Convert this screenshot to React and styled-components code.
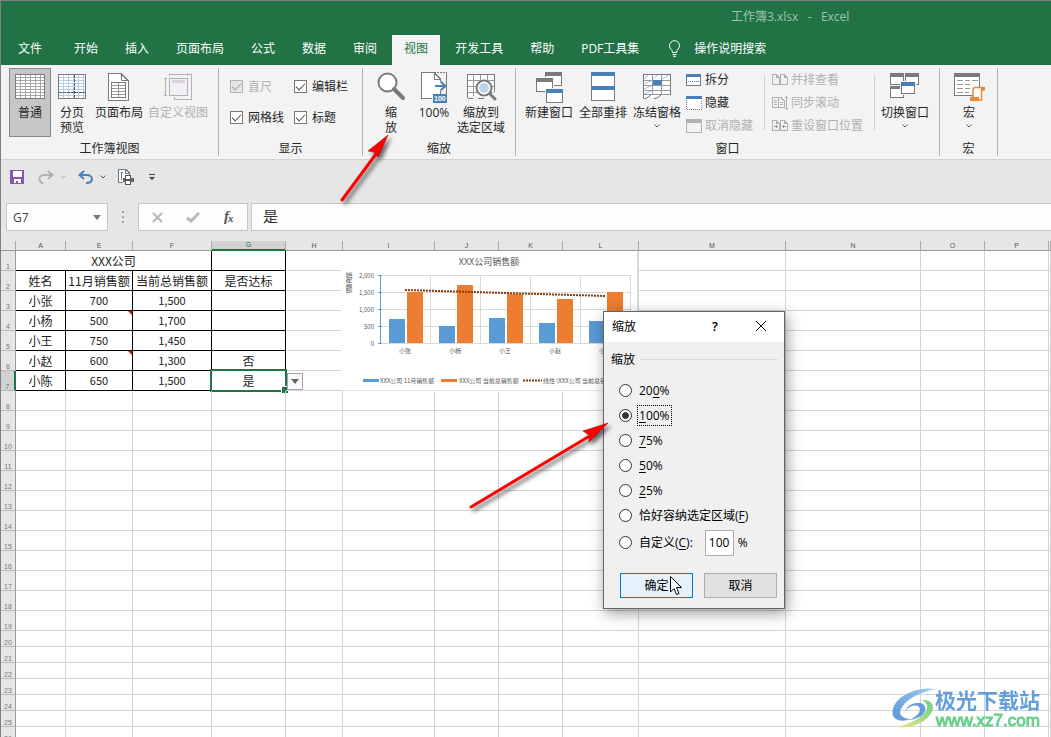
import React from 'react';
import styled, { createGlobalStyle } from 'styled-components';

const GlobalStyle = createGlobalStyle`
  * {
    box-sizing: border-box;
  }
  body {
    margin: 0;
    overflow: hidden;
    font-family: "Open Sans", "Noto Sans CJK SC", sans-serif;
    font-size: 12px;
    line-height: 15px;
    color: #262626;
  }
  button, input {
    font: inherit;
    color: inherit;
  }
  svg {
    display: block;
    flex: none;
  }
`;

const Window = styled.div`
  position: relative;
  display: flex;
  flex-direction: column;
  height: 100vh;
  overflow: hidden;
  border-left: 1px solid #7f7f7f;
  border-top: 1px solid #7f7f7f;
  background: #e6e6e6;
`;

/* ---------- title bar and tabs ---------- */

const TitleBar = styled.header`
  height: 34px;
  padding-left: 730px;
  line-height: 32px;
  white-space: pre;
  color: #9cc5ac;
  background: #217346;
`;

const TabBar = styled.nav`
  display: flex;
  gap: 3px;
  height: 30px;
  padding-left: 5px;
  background: #217346;
`;

const Tab = styled.button`
  height: 30px;
  padding: 0 12px 4px;
  border: 0;
  white-space: nowrap;
  margin-right: ${p => p.$file ? '5px' : '0'};
  color: ${p => p.$active ? '#217346' : '#fff'};
  background: ${p => p.$active ? '#f3f3f3' : 'transparent'};
`;

const TellMe = styled.button`
  display: flex;
  align-items: center;
  gap: 13px;
  padding: 0 14px 4px;
  border: 0;
  color: #fff;
  background: transparent;
`;

/* ---------- ribbon ---------- */

const Ribbon = styled.div`
  display: flex;
  height: 95px;
  padding: 3px 0;
  background: #f3f3f3;
  border-bottom: 1px solid #d2d2d2;
`;

const Group = styled.section`
  display: flex;
  flex-direction: column;
  flex: none;
  width: ${p => p.$width}px;
  padding-left: ${p => p.$pad}px;
  border-right: 1px solid #b4b4b4;
`;

const GroupBody = styled.div`
  display: flex;
  height: 73px;
`;

const GroupName = styled.div`
  margin-left: -${p => p.$pad}px;
  text-align: center;
`;

const BigButton = styled.button`
  display: flex;
  flex-direction: column;
  align-items: center;
  flex: none;
  width: ${p => p.$width}px;
  height: 69px;
  padding: 3px 0 0;
  border: 1px solid ${p => p.$pressed ? '#8a8a8a' : 'transparent'};
  background: ${p => p.$pressed ? '#c6c6c6' : 'transparent'};
  color: ${p => p.disabled ? '#b1b1b1' : '#262626'};
  white-space: pre;

  svg + span {
    margin: 1px -8px 0;
  }
  span + svg {
    margin-top: 4px;
  }
`;

const SmallColumn = styled.div`
  display: flex;
  flex-direction: column;
  width: ${p => p.$width}px;
  padding-left: 2px;
`;

const SmallButton = styled.button`
  display: flex;
  align-items: center;
  gap: 3px;
  height: 23px;
  padding: 0;
  border: 0;
  background: transparent;
  white-space: nowrap;
  color: ${p => p.disabled ? '#b1b1b1' : '#262626'};
`;

const Divider = styled.div`
  width: 1px;
  height: 55px;
  margin: 7px ${p => p.$gap}px 0 0;
  background: #d0d0d0;
`;

const CheckGrid = styled.div`
  display: grid;
  grid-template-columns: 64px 70px;
  grid-auto-rows: 31px;
  padding-top: 3px;
`;

const CheckLabel = styled.label`
  display: flex;
  align-items: center;
  gap: 5px;
  color: ${p => p.$disabled ? '#b1b1b1' : '#262626'};

  input {
    appearance: none;
    width: 13px;
    height: 13px;
    margin: 0;
    border: 1px solid ${p => p.$disabled ? '#b1b1b1' : '#777'};
    background: ${p => p.$disabled ? '#e6e6e6' : '#fff'};
  }
  input:checked::before {
    content: "";
    display: block;
    width: 8px;
    height: 4px;
    margin: 2px 0 0 1px;
    border: solid ${p => p.$disabled ? '#a0a0a0' : '#555'};
    border-width: 0 0 1px 1px;
    transform: rotate(-45deg);
  }
`;

/* ---------- quick access and formula bar ---------- */

const QuickAccess = styled.div`
  display: flex;
  align-items: center;
  gap: 12px;
  height: 34px;
  padding-left: 9px;
`;

const ToolButton = styled.button`
  display: flex;
  align-items: center;
  justify-content: center;
  gap: 6px;
  min-width: 12px;
  height: 20px;
  padding: 0;
  border: 0;
  background: transparent;
`;

const FormulaBar = styled.div`
  display: flex;
  flex: none;
  padding: 9px 0 10px 5px;
`;

const NameBox = styled.div`
  display: flex;
  align-items: center;
  width: 102px;
  height: 28px;
  padding-right: 6px;
  border: 1px solid #c6c6c6;
  background: #fdfdfd;

  input {
    flex: 1;
    min-width: 0;
    padding: 0 6px;
    border: 0;
    background: transparent;
    color: #444;
  }
`;

const Dots = styled.div`
  display: flex;
  flex-direction: column;
  align-items: center;
  justify-content: center;
  gap: 3px;
  width: 30px;

  i {
    width: 2px;
    height: 2px;
    background: #a6a6a6;
  }
`;

const EditButtons = styled.div`
  display: flex;
  width: 110px;
  margin-right: 3px;
  border: 1px solid #c6c6c6;
  background: #fdfdfd;

  button {
    display: flex;
    flex: 1;
    align-items: center;
    justify-content: center;
    padding: 0;
    border: 0;
    background: transparent;
  }
`;

const FormulaInput = styled.input`
  flex: 1;
  min-width: 0;
  padding: 0 11px 4px;
  border: 1px solid #c6c6c6;
  border-right: 0;
  background: #fdfdfd;
  font-size: 15px;
  color: #333;
`;

/* ---------- sheet ---------- */

const Sheet = styled.main`
  position: relative;
  flex: 1;
  min-height: 0;
  overflow: hidden;
`;

const Grid = styled.table`
  width: 100%;
  table-layout: fixed;
  border-collapse: separate;
  border-spacing: 0;
  background: #fff;
  font-family: "Noto Sans CJK SC", sans-serif;
  color: #1c1c1c;
`;

const ColHead = styled.th`
  height: 10px;
  padding: 0;
  border-right: 1px solid #ababab;
  border-bottom: ${p => p.$current ? '2px solid #217346' : '1px solid #999'};
  background: ${p => p.$current ? '#d2d2d2' : '#e6e6e6'};
  font-family: "Liberation Sans", sans-serif;
  font-size: 7px;
  line-height: 8px;
  font-weight: normal;
  color: ${p => p.$current ? '#217346' : '#555'};
  overflow: hidden;
`;

const RowHead = styled.th`
  height: ${p => p.$short ? 16 : 20}px;
  padding: 0;
  border-right: ${p => p.$current ? '2px solid #217346' : '1px solid #999'};
  border-bottom: 1px solid #b8b8b8;
  background: ${p => p.$current ? '#d2d2d2' : '#e6e6e6'};
  font-family: "Liberation Sans", sans-serif;
  font-size: 7px;
  line-height: 7px;
  font-weight: normal;
  vertical-align: bottom;
  color: #777;
`;

const Cell = styled.td`
  position: relative;
  padding: 0;
  border-right: 1px solid ${p => p.$ruled ? '#000' : '#d4d4d4'};
  border-bottom: 1px solid ${p => p.$ruled ? '#000' : '#d4d4d4'};
  text-align: center;
  white-space: nowrap;
  font-size: ${p => p.$number ? 11 : 12}px;
  line-height: 15px;
`;

const Comment = styled.i`
  position: absolute;
  top: 0;
  right: 0;
  border: 2px solid;
  border-color: #e00 #e00 transparent transparent;
`;

const Selection = styled.div`
  position: absolute;
  inset: -2px;
  border: 2px solid #217346;

  &::after {
    content: "";
    position: absolute;
    right: -4px;
    bottom: -4px;
    width: 6px;
    height: 6px;
    border: 1px solid #fff;
    background: #217346;
  }
`;

const CellDropdown = styled.button`
  position: absolute;
  left: 75px;
  top: 2px;
  z-index: 1;
  display: flex;
  align-items: center;
  justify-content: center;
  width: 16px;
  height: 17px;
  padding: 0;
  border: 1px solid #a0a6b0;
  background: #f8f9fb;
`;

const ChartFrame = styled.figure`
  position: absolute;
  left: 340px;
  top: 10px;
  width: 298px;
  height: 140px;
  margin: 0;
  border-right: 2px solid #d9d9d9;
  border-bottom: 1px solid #e4e4e4;
  background: #fff;

  text {
    font-family: "Noto Sans CJK SC", sans-serif;
    font-size: 6px;
    fill: #595959;
  }
  .title {
    font-size: 9px;
  }
  .axis {
    font-size: 7px;
    writing-mode: vertical-rl;
  }
`;

/* ---------- zoom dialog ---------- */

const Dialog = styled.form`
  position: absolute;
  left: 602px;
  top: 310px;
  width: 182px;
  border: 1px solid #666;
  background: #f0f0f0;
  color: #000;
  box-shadow: 2px 4px 14px rgba(0, 0, 0, .4);
`;

const DialogTitle = styled.div`
  display: flex;
  align-items: center;
  height: 30px;
  padding: 0 0 2px 8px;
  background: #fff;

  span {
    flex: 1;
  }
  button {
    display: flex;
    align-items: center;
    justify-content: center;
    width: 46px;
    height: 28px;
    padding: 0;
    border: 0;
    background: transparent;
    font-size: 13px;
    font-weight: 600;
  }
`;

const Options = styled.fieldset`
  margin: 0;
  padding: 9px 7px 0;
  border: 0;
`;

const Legend = styled.div`
  display: flex;
  align-items: center;
  gap: 5px;
  height: 16px;
  margin-bottom: 11px;

  &::after {
    content: "";
    flex: 1;
    height: 1px;
    margin-right: -1px;
    background: #dcdcdc;
  }
`;

const Option = styled.div`
  display: flex;
  align-items: center;
  height: ${p => p.$tall ? 29 : 25}px;
  padding-left: 8px;

  input[type="radio"] {
    appearance: none;
    width: 13px;
    height: 13px;
    margin: 0 5px 0 0;
    border: 1px solid #333;
    border-radius: 50%;
    background: #fff;
  }
  input[type="radio"]:checked {
    padding: 2px;
    background: #333 content-box;
    background-image: none;
    box-shadow: inset 0 0 0 2px #fff;
  }
  label {
    padding: 2px 1px;
    border: 1px dotted ${p => p.$focused ? '#000' : 'transparent'};
    white-space: nowrap;
  }
  u {
    text-underline-offset: 2px;
  }
`;

const PercentInput = styled.input`
  width: 29px;
  height: 26px;
  margin: 0 4px 0 10px;
  padding: 0 0 0 3px;
  border: 1px solid #adadad;
  background: #fff;
`;

const DialogButtons = styled.div`
  display: flex;
  gap: 11px;
  padding: 16px 7px 10px 16px;
`;

const DialogButton = styled.button`
  flex: 1;
  height: 25px;
  padding: 0;
  border: 1px solid ${p => p.$primary ? '#0078d7' : '#adadad'};
  background: ${p => p.$primary ? '#e5f1fb' : '#e1e1e1'};
  color: #000;
`;

/* ---------- things floating over the window ---------- */

const Overlay = styled.svg`
  position: absolute;
  left: ${p => p.$x}px;
  top: ${p => p.$y}px;
  overflow: visible;
  pointer-events: none;
  filter: ${p => p.$shadow ? 'drop-shadow(3px 3px 2px rgba(0, 0, 0, .6))' : 'none'};
`;

const Watermark = styled.div`
  position: absolute;
  right: 11px;
  bottom: 6px;
  display: flex;
  align-items: center;
  opacity: .85;
  pointer-events: none;
`;

const WatermarkText = styled.div`
  margin-left: -2px;
  font-family: "Noto Sans CJK SC", sans-serif;
  font-size: 21px;
  font-weight: bold;
  line-height: 24px;
  color: #4a90d4;

  small {
    display: block;
    padding-left: 1px;
    font-family: "Liberation Sans", sans-serif;
    font-size: 17px;
    line-height: 20px;
    font-weight: normal;
    -webkit-text-stroke: 1px #4fc878;
    color: #4fc878;
  }
`;

/* ---------- icons ---------- */

const G = '#7a7a7a';
const B = '#4a80b8';
const L = '#b1b1b1';

const Icon = ({ children, w = 32, h = 32 }) => (
  <svg width={w} height={h} viewBox={`0 0 ${w} ${h}`} fill="none" shapeRendering="crispEdges" aria-hidden="true">
    {children}
  </svg>
);

const lines = (from, to, step, draw) => {
  let d = '';
  for (let n = from; n < to; n += step) d += draw(n);
  return d;
};

// a little window: frame plus coloured caption strip
const Win = ({ x, y, w, h, c = G, strip = 4 }) => (
  <>
    <rect x={x + .5} y={y + .5} width={w - 1} height={h - 1} fill="#fff" stroke={G} />
    <rect x={x} y={y} width={w} height={strip} fill={c} />
  </>
);

const Caret = ({ color = '#555' }) => (
  <svg width="6" height="4" viewBox="0 0 6 4" fill="none" stroke={color}>
    <path d="M.5.5 3 3 5.5.5" />
  </svg>
);

const NormalIcon = () => (
  <Icon>
    <rect x="1.5" y="2.5" width="29" height="24" fill="#fff" stroke={G} />
    <path stroke="#a6a6a6" d={lines(6.5, 30, 5, n => `M${n} 3V26`) + lines(5.5, 26, 3, n => `M2 ${n}H30`)} />
  </Icon>
);

const PageBreakIcon = () => (
  <Icon>
    <rect x="2.5" y="2.5" width="27" height="24" fill="#fff" stroke={G} />
    <path stroke="#b5cfea" d={lines(7.5, 29, 5, n => `M${n} 3V26`) + lines(5.5, 26, 3, n => `M3 ${n}H29`)} />
    <path stroke="#555" strokeDasharray="3 1" d="M18.5 3V26M3 20.5H29" />
  </Icon>
);

const PageLayoutIcon = () => (
  <Icon>
    <path d="M5.5 1.5H18L25.5 9V28.5H5.5Z" fill="#fff" stroke={G} />
    <path d="M18.5 1.5V8.5H25.5M18.5 2 25 8.5" stroke={G} shapeRendering="auto" />
    <rect x="8.5" y="10.5" width="14" height="15" stroke={G} />
    <path stroke="#999" d="M15.500 11V25M9 13.5H22M9 16.5H22M9 19.5H22M9 22.5H22" />
  </Icon>
);

const CustomViewIcon = () => (
  <Icon>
    <rect x="7.5" y="6.5" width="18" height="17" fill="#f4eef6" stroke={L} />
    <rect x="10" y="8" width="13" height="3" fill="#d9d2dc" />
    <path stroke={L} d="M7.5 1V4M25.5 1V4M8 2.5H25M2 6.5H5M2 23.5H5M3.5 7V23M26 2.5H29.5V27.5H12.5V25" />
  </Icon>
);

const ZoomIcon = () => (
  <svg width="32" height="32" viewBox="0 0 32 32" fill="none">
    <circle cx="12.500" cy="10.500" r="9" fill="#fff" stroke={G} strokeWidth="2" />
    <path d="M19 17 28 26" stroke={G} strokeWidth="4" strokeLinecap="round" />
  </svg>
);

const Zoom100Icon = () => (
  <Icon>
    <path d="M16 .5H28.500V22M28.500 1V22" stroke={G} strokeDasharray="2 1" />
    <path d="M13 26.500H3.500V.5H16L22.500 7V22" fill="#fff" />
    <path d="M14 26.500H3.500V.5H16L22.500 7V9M22.500 19V22" stroke={G} />
    <path d="M16.500 1V7.500H22.500" stroke={G} />
    <path d="M17 14H27M22.500 9.500 27.500 14 22.500 18.500" stroke={B} strokeWidth="2" shapeRendering="auto" />
    <rect x="15" y="22" width="14" height="9" fill={B} />
    <text x="16" y="29" fontSize="7" fontWeight="bold" fill="#fff" fontFamily="Liberation Sans, sans-serif">100</text>
  </Icon>
);

const ZoomSelectionIcon = () => (
  <Icon>
    <rect x="2.5" y="2.5" width="27" height="21" fill="#fff" />
    <path stroke={G} d="M2.500 26V2.500H29.500V20M2.500 26.500H8M13 26.500H19" />
    <path stroke="#999" d="M3 8.500H29M3 14.500H29M3 20.500H29M8.500 3V24M15.500 3V24M22.500 3V24" />
    <g shapeRendering="auto">
      <circle cx="19" cy="16" r="7.5" fill="#fff" stroke={G} strokeWidth="2" />
      <circle cx="19" cy="16" r="5" fill="#bcd3ec" />
      <path d="M25 22 30 27" stroke={G} strokeWidth="3" strokeLinecap="round" />
    </g>
  </Icon>
);

const NewWindowIcon = () => (
  <Icon>
    <Win x={12} y={0} w={17} h={14} />
    <rect x="2" y="5" width="19" height="16" fill="#f3f3f3" />
    <Win x={3} y={6} w={17} h={14} />
    <rect x="12" y="16" width="19" height="16" fill="#f3f3f3" />
    <Win x={13} y={17} w={17} h={14} c={B} />
  </Icon>
);

const ArrangeIcon = () => (
  <Icon>
    <Win x={4} y={0} w={24} h={15} c={B} />
    <Win x={4} y={14} w={24} h={15} c={B} />
  </Icon>
);

const FreezeIcon = () => (
  <Icon>
    <path d="M2.500 26V2.500H29.500V22.500" fill="#fff" />
    <path d="M2.500 26V2.500H29.500V22.500" stroke={G} />
    <path stroke="#999" d="M3 8.500H29M3 13.500H29M3 18.500H29M3 22.500H29M11.500 3V22M20.500 3V22" />
    <path d="M3 7 7 3M12 7 17 3M21 7 28 3M3 12 10 9M3 17 10 14M3 22 10 19" stroke="#9fc0e3" shapeRendering="auto" />
    <path d="M2.500 26.500H5L10 23M13 26.500H15L20 23" stroke={G} shapeRendering="auto" />
    <rect x="12" y="8" width="9" height="5" fill={B} />
  </Icon>
);

const SwitchIcon = () => (
  <Icon>
    <Win x={1} y={1} w={14} h={12} />
    <Win x={16} y={1} w={14} h={12} />
    <Win x={1} y={14} w={14} h={12} strip={3} />
    <rect x="11" y="9" width="16" height="14" fill="#f3f3f3" />
    <Win x={12} y={10} w={14} h={12} c={B} />
  </Icon>
);

const MacroIcon = () => (
  <Icon>
    <Win x={1} y={1} w={26} h={23} />
    <path stroke="#999" d="M4 8.500H10M12 8.500H17M19 8.500H25M4 12.500H10M12 12.500H17M4 16.500H10M12 16.500H17M4 20.500H10M12 20.500H16" />
    <path d="M21.500 15.500H31V18H28.500V28H18V25.500H20V17Z" fill="#fff" stroke="#e8873a" strokeWidth="1.500" shapeRendering="auto" />
    <path d="M17 25H26V28.500H17ZM28 15H32V18H28Z" fill="#e8873a" />
  </Icon>
);

const SplitIcon = () => (
  <Icon w={16} h={14}>
    <rect x=".5" y="1.500" width="14" height="11" fill="#fff" stroke={G} />
    <rect y="1" width="15" height="3" fill={B} />
    <path stroke={B} strokeDasharray="1 1" d="M2 8.500H13" />
  </Icon>
);

const HideIcon = () => (
  <Icon w={16} h={14}>
    <rect y="1" width="16" height="12" fill="#fff" />
    <path stroke={G} strokeDasharray="1 1" d="M.5 4V13.500H15.500V4" />
    <rect width="16" height="3" fill={B} />
  </Icon>
);

const UnhideIcon = () => (
  <Icon w={16} h={14}>
    <rect x=".5" y="1.500" width="15" height="12" stroke={L} />
    <rect width="16" height="4" fill={L} />
  </Icon>
);

const PAGES = 'M.5 1.500H4L7.500 5V11.500H.5ZM8.500 1.500H12L15.500 5V11.500H8.500ZM4.500 2V4.500H7M12.500 2V4.500H15';

const SideBySideIcon = () => (
  <Icon w={16} h={14}>
    <path d={PAGES} fill="#f4eef6" stroke={L} />
  </Icon>
);

const SyncIcon = () => (
  <Icon w={16} h={14}>
    <path d="M6 1.500H.5V11.500H6M6.500 1.500H9L12.500 5V11.500H6.500Z" fill="#f4eef6" stroke={L} />
    <path d="M2 4.500H5M2 6.500H5M2 8.500H5M8 6.500H11M8 8.500H11M14.500 0V14M13 1.500H16M13 12.500H16" stroke={L} />
  </Icon>
);

const ResetIcon = () => (
  <Icon w={16} h={14}>
    <path d={PAGES} fill="#f4eef6" stroke={L} />
    <path d="M2 7.500H6M4.500 6V9M10 7.500H14M11.500 6V9" stroke="#999" />
  </Icon>
);

const BulbIcon = () => (
  <svg width="13" height="17" viewBox="0 0 13 17" fill="none" stroke="#fff">
    <path d="M4.500 12.500C4.500 9.500 1.500 9 1.500 5.700A5 5 0 0 1 11.500 5.700C11.500 9 8.500 9.500 8.500 12.500ZM4.500 14.500H8.500M5 16.300H8" />
  </svg>
);

const SaveIcon = () => (
  <Icon w={16} h={14}>
    <path d="M0 0H14V14H0Z" fill="#8a56b0" />
    <path d="M3 1H12V7H3ZM4 9H11V13H8V11H6V13H4Z" fill="#fff" />
  </Icon>
);

const UndoIcon = ({ color, flip }) => (
  <svg width="16" height="14" viewBox="0 0 16 14" fill="none" stroke={color} strokeWidth="2">
    <path d={flip
      ? 'M14 5H6C3 5 1.500 7 1.500 9S3 13 5.500 13M10 1 14.500 5 10 9'
      : 'M1.500 5H9C12 5 14 7 14 9S12 13 8 13M6 1 1.500 5 6 9'} />
  </svg>
);

const PrintIcon = () => (
  <Icon w={16} h={16}>
    <path d="M5 13.500H.5V.5H8L11.500 4V6" fill="#fff" stroke={G} />
    <path d="M3.500 11V3M3.500 3H5" stroke={B} />
    <path d="M7.500 .5V4.500H11" stroke={G} />
    <rect x="7.500" y="6.500" width="5" height="4" fill="#fff" stroke="#555" />
    <path d="M5 9H7V11H13V9H16V13H13V14H7V13H5Z" fill="#666" />
    <rect x="7.500" y="11.500" width="5" height="4" fill="#fff" stroke="#555" />
  </Icon>
);

/* ---------- data ---------- */

const TABS = ['文件', '开始', '插入', '页面布局', '公式', '数据', '审阅', '视图', '开发工具', '帮助', 'PDF工具集'];

const COLUMNS = [
  ['A', 50], ['E', 67], ['F', 79], ['G', 74], ['H', 57], ['I', 92], ['J', 64],
  ['K', 64], ['L', 76], ['M', 147], ['N', 135], ['O', 64], ['P', 64], ['', null],
];

const ROWS = [
  null,
  ['姓名', '11月销售额', '当前总销售额', '是否达标'],
  ['小张', '700', '1,500', ''],
  ['小杨', '500', '1,700', ''],
  ['小王', '750', '1,450', ''],
  ['小赵', '600', '1,300', '否'],
  ['小陈', '650', '1,500', '是'],
];

const COMMENTED = [4, 6];

const BARS = [
  { name: '小张', nov: 700, total: 1500 },
  { name: '小杨', nov: 500, total: 1700 },
  { name: '小王', nov: 750, total: 1450 },
  { name: '小赵', nov: 600, total: 1300 },
  { name: '小陈', nov: 650, total: 1500 },
];

/* ---------- parts ---------- */

const Big = ({ icon, label, menu, ...rest }) => (
  <BigButton type="button" {...rest}>
    {icon}
    <span>{label}</span>
    {menu && <Caret />}
  </BigButton>
);

const Small = ({ icon, label, disabled }) => (
  <SmallButton type="button" disabled={disabled}>{icon}{label}</SmallButton>
);

const Check = ({ label, disabled }) => (
  <CheckLabel $disabled={disabled}>
    <input type="checkbox" defaultChecked disabled={disabled} />
    {label}
  </CheckLabel>
);

const RibbonGroup = ({ name, width, pad, children }) => (
  <Group $width={width} $pad={pad}>
    <GroupBody>{children}</GroupBody>
    <GroupName $pad={pad}>{name}</GroupName>
  </Group>
);

const ViewRibbon = () => (
  <Ribbon>
    <RibbonGroup name="工作簿视图" width={218} pad={8}>
      <Big icon={<NormalIcon />} label="普通" $width={42} $pressed />
      <Big icon={<PageBreakIcon />} label={'分页\n预览'} $width={42} />
      <Big icon={<PageLayoutIcon />} label="页面布局" $width={52} />
      <Big icon={<CustomViewIcon />} label="自定义视图" $width={66} disabled />
    </RibbonGroup>
    <RibbonGroup name="显示" width={144} pad={11}>
      <CheckGrid>
        <Check label="直尺" disabled />
        <Check label="编辑栏" />
        <Check label="网格线" />
        <Check label="标题" />
      </CheckGrid>
    </RibbonGroup>
    <RibbonGroup name="缩放" width={153} pad={7}>
      <Big icon={<ZoomIcon />} label={'缩\n放'} $width={42} />
      <Big icon={<Zoom100Icon />} label="100%" $width={44} />
      <Big icon={<ZoomSelectionIcon />} label={'缩放到\n选定区域'} $width={50} />
    </RibbonGroup>
    <RibbonGroup name="窗口" width={424} pad={6}>
      <Big icon={<NewWindowIcon />} label="新建窗口" $width={54} />
      <Big icon={<ArrangeIcon />} label="全部重排" $width={54} />
      <Big icon={<FreezeIcon />} label="冻结窗格" menu $width={54} />
      <SmallColumn $width={80}>
        <Small icon={<SplitIcon />} label="拆分" />
        <Small icon={<HideIcon />} label="隐藏" />
        <Small icon={<UnhideIcon />} label="取消隐藏" disabled />
      </SmallColumn>
      <Divider $gap={5} />
      <SmallColumn $width={104}>
        <Small icon={<SideBySideIcon />} label="并排查看" disabled />
        <Small icon={<SyncIcon />} label="同步滚动" disabled />
        <Small icon={<ResetIcon />} label="重设窗口位置" disabled />
      </SmallColumn>
      <Divider $gap={4} />
      <Big icon={<SwitchIcon />} label="切换窗口" menu $width={52} />
    </RibbonGroup>
    <RibbonGroup name="宏" width={58} pad={8}>
      <Big icon={<MacroIcon />} label="宏" menu $width={42} />
    </RibbonGroup>
  </Ribbon>
);

const Chart = () => {
  const y = v => 92 - v * 0.034;
  return (
    <ChartFrame>
      <svg width="296" height="139" viewBox="0 0 296 139">
        <text className="title" x="148" y="14" textAnchor="middle">XXX公司销售额</text>
        <text className="axis" x="8" y="21">销售额</text>
        {[0, 500, 1000, 1500, 2000].map(v => (
          <g key={v}>
            <path d={`M39 ${Math.round(y(v)) + .5}H289`} stroke="#d9d9d9" />
            <path d={`M37 ${Math.round(y(v)) + .5}H41`} stroke="#5b9bd5" />
            <text x="33" y={y(v) + 3} textAnchor="end">{v.toLocaleString('en-US')}</text>
          </g>
        ))}
        {BARS.map((b, i) => (
          <g key={b.name} shapeRendering="crispEdges">
            <path d={`M${89.500 + i * 50} 24V92`} stroke="#d9d9d9" />
            <rect x={48 + i * 50} y={y(b.nov)} width="16" height={b.nov * 0.034} fill="#5b9bd5" />
            <rect x={66 + i * 50} y={y(b.total)} width="16" height={b.total * 0.034} fill="#ed7d31" />
            <text x={64 + i * 50} y="102" textAnchor="middle">{b.name}</text>
          </g>
        ))}
        <path d="M39.500 24V93" stroke="#5b9bd5" />
        <path d="M64 39 265 45" stroke="#843c0b" strokeWidth="2" strokeDasharray="2 1" />
        <rect x="22" y="128" width="16" height="3" fill="#5b9bd5" />
        <text x="39" y="132">XXX公司 11月销售额</text>
        <rect x="100" y="128" width="16" height="3" fill="#ed7d31" />
        <text x="118" y="132">XXX公司 当前总销售额</text>
        <path d="M182 129.500H201" stroke="#843c0b" strokeWidth="2" strokeDasharray="2 1" />
        <text x="202" y="132">线性 (XXX公司 当前总销售额)</text>
      </svg>
    </ChartFrame>
  );
};

const DataCells = ({ row, values }) => {
  if (!values) {
    return (
      <>
        <Cell $ruled colSpan={3}>XXX公司</Cell>
        <Cell $ruled />
      </>
    );
  }
  return values.map((v, i) => (
    <Cell key={i} $ruled $number={row > 2 && (i === 1 || i === 2)}>
      {v}
      {i === 1 && COMMENTED.includes(row) && <Comment />}
      {i === 3 && row === 7 && (
        <>
          <Selection />
          <CellDropdown type="button" aria-label="选择">
            <svg width="8" height="5" viewBox="0 0 8 5"><path d="M0 0H8L4 5Z" fill="#666" /></svg>
          </CellDropdown>
        </>
      )}
    </Cell>
  ));
};

const SheetGrid = () => (
  <Grid>
    <colgroup>
      <col style={{ width: 15 }} />
      {COLUMNS.map(([name, width]) => (
        <col key={name} style={width ? { width } : undefined} />
      ))}
    </colgroup>
    <thead>
      <tr>
        <ColHead />
        {COLUMNS.map(([name]) => <ColHead key={name} $current={name === 'G'}>{name}</ColHead>)}
      </tr>
    </thead>
    <tbody>
      {Array.from({ length: 26 }, (_, i) => i + 1).map(row => {
        const filled = row <= ROWS.length;
        return (
          <tr key={row}>
            <RowHead $short={row > 19} $current={row === 7}>{row}</RowHead>
            {filled && <DataCells row={row} values={ROWS[row - 1]} />}
            {COLUMNS.slice(filled ? 4 : 0).map(([name]) => <Cell key={name} />)}
          </tr>
        );
      })}
    </tbody>
  </Grid>
);

const ZoomOption = ({ id, checked, tall, label, children }) => (
  <Option $focused={checked} $tall={tall}>
    <input type="radio" name="zoom" id={id} defaultChecked={checked} />
    <label htmlFor={id}>{label}</label>
    {children}
  </Option>
);

const ZoomDialog = () => (
  <Dialog role="dialog" aria-label="缩放">
    <DialogTitle>
      <span>缩放</span>
      <button type="button">?</button>
      <button type="button" aria-label="关闭">
        <svg width="12" height="12" viewBox="0 0 12 12" stroke="#000"><path d="M1 1 11 11M11 1 1 11" /></svg>
      </button>
    </DialogTitle>
    <Options>
      <Legend>缩放</Legend>
      <ZoomOption id="z200" label={<>20<u>0</u>%</>} />
      <ZoomOption id="z100" label={<><u>1</u>00%</>} checked />
      <ZoomOption id="z75" label={<><u>7</u>5%</>} />
      <ZoomOption id="z50" label={<><u>5</u>0%</>} />
      <ZoomOption id="z25" label={<><u>2</u>5%</>} />
      <ZoomOption id="fit" label={<>恰好容纳选定区域(<u>F</u>)</>} />
      <ZoomOption id="custom" label={<>自定义(<u>C</u>):</>} tall>
        <PercentInput type="text" defaultValue="100" aria-label="自定义百分比" />
        %
      </ZoomOption>
    </Options>
    <DialogButtons>
      <DialogButton type="button" $primary>确定</DialogButton>
      <DialogButton type="button">取消</DialogButton>
    </DialogButtons>
  </Dialog>
);

const App = () => (
  <>
    <GlobalStyle />
    <Window>
      <TitleBar>{'工作簿3.xlsx   -   Excel'}</TitleBar>
      <TabBar>
        {TABS.map(t => (
          <Tab key={t} type="button" $file={t === '文件'} $active={t === '视图'}>{t}</Tab>
        ))}
        <TellMe type="button"><BulbIcon />操作说明搜索</TellMe>
      </TabBar>
      <ViewRibbon />
      <QuickAccess>
        <ToolButton type="button" aria-label="保存"><SaveIcon /></ToolButton>
        <ToolButton type="button" aria-label="恢复"><UndoIcon flip color={L} /><Caret color={L} /></ToolButton>
        <ToolButton type="button" aria-label="撤消"><UndoIcon color={B} /><Caret /></ToolButton>
        <ToolButton type="button" aria-label="打印预览"><PrintIcon /></ToolButton>
        <ToolButton type="button" aria-label="自定义快速访问工具栏">
          <svg width="6" height="7" viewBox="0 0 6 7"><path d="M0 0H6V1H0ZM0 3H6L3 6Z" fill="#444" /></svg>
        </ToolButton>
      </QuickAccess>
      <FormulaBar>
        <NameBox>
          <input type="text" defaultValue="G7" aria-label="名称框" />
          <svg width="8" height="5" viewBox="0 0 8 5"><path d="M0 0H8L4 5Z" fill="#777" /></svg>
        </NameBox>
        <Dots><i /><i /><i /></Dots>
        <EditButtons>
          <button type="button" aria-label="取消">
            <svg width="11" height="11" viewBox="0 0 11 11" stroke="#b8b8b8" strokeWidth="2"><path d="M1 1 10 10M10 1 1 10" /></svg>
          </button>
          <button type="button" aria-label="输入">
            <svg width="14" height="11" viewBox="0 0 14 11" fill="none" stroke="#b8b8b8" strokeWidth="3"><path d="M1 6 5 9 13 1" /></svg>
          </button>
          <button type="button" aria-label="插入函数">
            <svg width="14" height="16" viewBox="0 0 14 16" fill="#555" fontFamily="Liberation Serif, serif" fontStyle="italic" fontWeight="bold">
              <text x="2" y="12" fontSize="15">f</text>
              <text x="6" y="13" fontSize="11">x</text>
            </svg>
          </button>
        </EditButtons>
        <FormulaInput type="text" defaultValue="是" aria-label="编辑栏" />
      </FormulaBar>
      <Sheet>
        <SheetGrid />
        <Chart />
      </Sheet>
      <Watermark>
        <svg width="46" height="44" viewBox="0 0 46 44">
          <defs>
            <linearGradient id="swirl" x1="1" y1="0" x2="0" y2="1">
              <stop offset="0" stopColor="#8cc4ee" />
              <stop offset="1" stopColor="#3f86d0" />
            </linearGradient>
            <linearGradient id="leaf" x1="1" y1="0" x2="0" y2="1">
              <stop offset="0" stopColor="#4fc878" />
              <stop offset="1" stopColor="#e6e36a" />
            </linearGradient>
          </defs>
          <path d="M45 2C26-1 5 9 2 22-1 33 10 36 20 32 12 32 7 28 10 22 14 13 28 5 45 2Z" fill="url(#swirl)" />
          <path d="M14 24C18 15 32 13 34 20 36 27 28 32 18 33 26 30 31 24 28 20 25 17 18 19 14 24Z" fill="#4a90d4" />
          <path d="M30 13C42 12 45 20 39 28 32 37 18 42 5 40 20 37 34 30 36 21 37 17 34 14 30 13Z" fill="url(#leaf)" />
        </svg>
        <WatermarkText>
          极光下载站
          <small>www.xz7.com</small>
        </WatermarkText>
      </Watermark>
      <ZoomDialog />
      <Overlay $x={340} $y={133} $shadow width="48" height="67">
        <path d="M1 66 35 20" stroke="#f00" strokeWidth="3" strokeLinecap="round" />
        <path d="M47 1 37 23 33 18 27 17Z" fill="#f00" stroke="#900" strokeWidth=".5" />
      </Overlay>
      <Overlay $x={469} $y={421} $shadow width="140" height="86">
        <path d="M1 85 118 15" stroke="#f00" strokeWidth="3" strokeLinecap="round" />
        <path d="M138 1 119 20 119 13 113 9Z" fill="#f00" stroke="#900" strokeWidth=".5" />
      </Overlay>
      <Overlay $x={669} $y={575} width="12" height="19">
        <path d="M.5.5V16L4 12.500 6.500 18.500 9 17.500 6.500 11.500H11.500Z" fill="#fff" stroke="#000" />
      </Overlay>
    </Window>
  </>
);

export default App;
